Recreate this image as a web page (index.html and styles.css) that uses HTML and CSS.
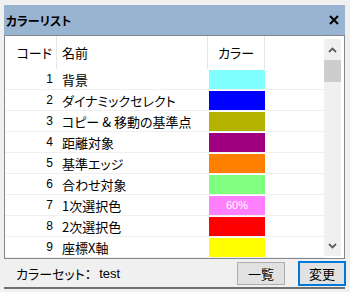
FILE: index.html
```html
<!DOCTYPE html>
<html lang="ja">
<head>
    <meta charset="UTF-8">
    <title>カラーリスト</title>
    <link rel="stylesheet" href="styles.css">
</head>
<body>
    <div class="window">
        <div class="titlebar">
            <span class="title">カラーリスト</span>
            <svg class="close" width="10" height="10" viewBox="0 0 10 10">
                <path d="M1 1 L9 9 M9 1 L1 9" stroke="#000" stroke-width="2"/>
            </svg>
        </div>

        <div class="list">
            <div class="table">
                <div class="row head">
                    <div class="cell num">コード</div>
                    <div class="cell name">名前</div>
                    <div class="cell color-head">カラー</div>
                    <div class="cell"></div>
                </div>
                <div class="row">
                    <div class="cell num">1</div>
                    <div class="cell name">背景</div>
                    <div class="cell"><div class="swatch" style="background:#80ffff"></div></div>
                    <div class="cell"></div>
                </div>
                <div class="row">
                    <div class="cell num">2</div>
                    <div class="cell name">ダイナミックセレクト</div>
                    <div class="cell"><div class="swatch" style="background:#0000ff"></div></div>
                    <div class="cell"></div>
                </div>
                <div class="row">
                    <div class="cell num">3</div>
                    <div class="cell name">コピー &amp; 移動の基準点</div>
                    <div class="cell"><div class="swatch" style="background:#b4b400"></div></div>
                    <div class="cell"></div>
                </div>
                <div class="row">
                    <div class="cell num">4</div>
                    <div class="cell name">距離対象</div>
                    <div class="cell"><div class="swatch" style="background:#a00080"></div></div>
                    <div class="cell"></div>
                </div>
                <div class="row">
                    <div class="cell num">5</div>
                    <div class="cell name">基準エッジ</div>
                    <div class="cell"><div class="swatch" style="background:#ff8000"></div></div>
                    <div class="cell"></div>
                </div>
                <div class="row">
                    <div class="cell num">6</div>
                    <div class="cell name">合わせ対象</div>
                    <div class="cell"><div class="swatch" style="background:#80ff80"></div></div>
                    <div class="cell"></div>
                </div>
                <div class="row">
                    <div class="cell num">7</div>
                    <div class="cell name">1次選択色</div>
                    <div class="cell"><div class="swatch" style="background:#ff80ff">60%</div></div>
                    <div class="cell"></div>
                </div>
                <div class="row">
                    <div class="cell num">8</div>
                    <div class="cell name">2次選択色</div>
                    <div class="cell"><div class="swatch" style="background:#ff0000"></div></div>
                    <div class="cell"></div>
                </div>
                <div class="row">
                    <div class="cell num">9</div>
                    <div class="cell name">座標X軸</div>
                    <div class="cell"><div class="swatch" style="background:#ffff00"></div></div>
                    <div class="cell"></div>
                </div>
            </div>

            <div class="scrollbar">
                <div class="arrow">
                    <svg width="9" height="6" viewBox="0 0 9 6"><path d="M1 5 L4.5 1.5 L8 5" fill="none" stroke="#606060" stroke-width="1.8"/></svg>
                </div>
                <div class="thumb"></div>
                <div class="track"></div>
                <div class="arrow">
                    <svg width="9" height="6" viewBox="0 0 9 6"><path d="M1 1 L4.5 4.5 L8 1" fill="none" stroke="#606060" stroke-width="1.8"/></svg>
                </div>
            </div>
        </div>

        <div class="footer">
            <span class="set-label">カラーセット：</span>
            <span class="set-name">test</span>
            <span class="spacer"></span>
            <button class="btn">一覧</button>
            <button class="btn btn-focus">変更</button>
        </div>
    </div>
</body>
</html>
```

FILE: styles.css
```css
body {
    margin: 0;
    background-color: #f0f0f0;
    font-family: "Noto Sans CJK JP", "Liberation Sans", sans-serif;
    font-feature-settings: "palt";
    color: #000;
}
.window {
    margin: 5px 5px 0 4px;
    height: 282px;
    display: flex;
    flex-direction: column;
    border-bottom: 2px solid #6e6e6e;
}
.titlebar {
    height: 30px;
    background-color: #99b4d1;
    display: flex;
    align-items: center;
    justify-content: space-between;
    padding: 0 6px 0 2px;
}
.title {
    font-size: 12px;
    font-weight: bold;
}
.list {
    height: 222px;
    border: 1px solid #828790;
    background: white;
    display: flex;
}
.table {
    flex: 1;
    display: flex;
    flex-direction: column;
}
.row {
    display: grid;
    grid-template-columns: 52px 151px 57px 1fr;
    height: 21px;
    border-bottom: 1px solid #f0f0f0;
    box-sizing: border-box;
    font-size: 13px;
}
.row.head {
    height: 33px;
    border-bottom: none;
}
.cell {
    display: flex;
    align-items: center;
    min-width: 0;
    white-space: nowrap;
}
.head .cell {
    border-right: 1px solid #e5e5e5;
}
.head .cell:last-child {
    border-right: none;
}
.num {
    justify-content: flex-end;
    padding-right: 4px;
    font-family: "Liberation Sans", sans-serif;
    font-size: 12px;
}
.head .num {
    font-family: "Noto Sans CJK JP", sans-serif;
    font-size: 13px;
}
.name {
    padding-left: 5px;
}
.color-head {
    justify-content: center;
}
.swatch {
    width: 56px;
    height: 19px;
    margin: 0 0 0 1px;
    color: white;
    font-family: "Liberation Sans", sans-serif;
    font-size: 11px;
    display: flex;
    align-items: center;
    justify-content: center;
}
.scrollbar {
    width: 17px;
    margin: 3px 3px 2px 0;
    background-color: #f0f0f0;
    display: flex;
    flex-direction: column;
}
.arrow {
    height: 21px;
    display: flex;
    align-items: center;
    justify-content: center;
}
.thumb {
    height: 22px;
    background-color: #cdcdcd;
}
.track {
    flex: 1;
}
.footer {
    flex: 1;
    display: flex;
    align-items: center;
    padding-left: 12px;
    font-size: 13px;
}
.set-name {
    font-family: "Liberation Sans", sans-serif;
    margin-left: 8px;
}
.spacer {
    flex: 1;
}
.btn {
    width: 48px;
    height: 23px;
    background-color: #e1e1e1;
    border: 1px solid #adadad;
    font-family: "Noto Sans CJK JP", sans-serif;
    font-size: 13px;
    padding: 0;
    margin-left: 13px;
}
.btn-focus {
    height: 25px;
    border: 2px solid #0078d7;
    margin-right: -1px;
}
```
